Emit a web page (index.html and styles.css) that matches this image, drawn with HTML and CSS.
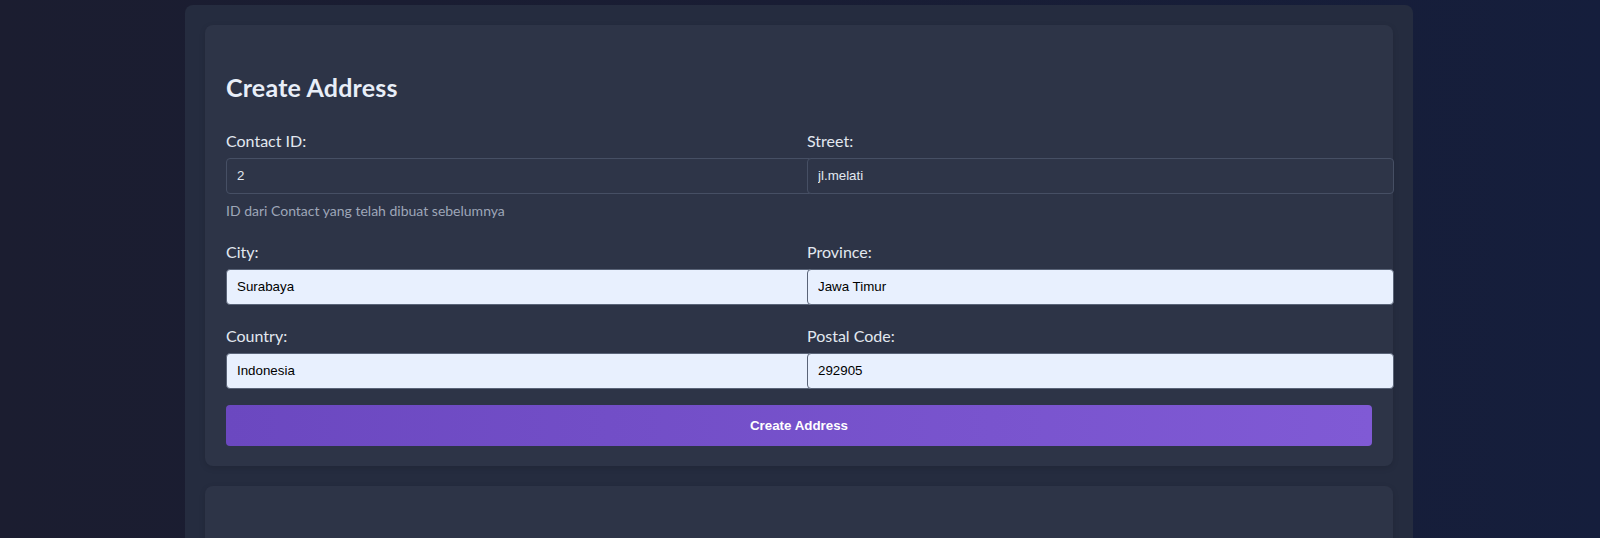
FILE: index.html
```html
<!DOCTYPE html>
<html lang="id">
<head>
<meta charset="utf-8">
<title>Create Address</title>
<link rel="stylesheet" href="styles.css">
</head>
<body>
<div class="container">
  <section class="card">
    <h2 class="title">Create Address</h2>
    <form class="form">
      <div class="grid">
        <div class="group">
          <label class="label">Contact ID:</label>
          <input class="input" type="text" value="2">
          <div class="hint">ID dari Contact yang telah dibuat sebelumnya</div>
        </div>
        <div class="group">
          <label class="label">Street:</label>
          <input class="input" type="text" value="jl.melati">
        </div>
        <div class="group">
          <label class="label">City:</label>
          <input class="input filled" type="text" value="Surabaya">
        </div>
        <div class="group">
          <label class="label">Province:</label>
          <input class="input filled" type="text" value="Jawa Timur">
        </div>
        <div class="group">
          <label class="label">Country:</label>
          <input class="input filled" type="text" value="Indonesia">
        </div>
        <div class="group">
          <label class="label">Postal Code:</label>
          <input class="input filled" type="text" value="292905">
        </div>
      </div>
      <button class="btn" type="button">Create Address</button>
    </form>
  </section>
  <section class="card card-next"></section>
</div>
</body>
</html>
```

FILE: styles.css
```css
html, body {
  margin: 0;
  padding: 0;
}
body {
  height: 538px;
  overflow: hidden;
  background: linear-gradient(to right, #1b1d30 0%, #191d34 50%, #151e3c 100%);
  font-family: "Segoe UI", Lato, "Noto Sans", sans-serif;
  color: #e2e8f0;
}
.container {
  box-sizing: border-box;
  width: 1228px;
  margin: 5px 0 0 calc(50% - 615px);
  padding: 20px;
  min-height: 600px;
  background: #252c3f;
  border-radius: 8px 8px 0 0;
}
.card {
  background: #2d3447;
  border-radius: 8px;
  padding: 20px 21px;
  box-shadow: 0 2px 6px rgba(0, 0, 0, 0.12);
}
.card-next {
  margin-top: 20px;
  height: 120px;
}
.title {
  margin: 26px 0 25px;
  font-size: 25px;
  line-height: 33px;
  letter-spacing: 0.2px;
  font-weight: 700;
  color: #e8eef8;
}
.grid {
  display: grid;
  grid-template-columns: repeat(2, minmax(0, 1fr));
  column-gap: 16px;
  row-gap: 19px;
}
.group {
  min-width: 0;
}
.label {
  display: block;
  font-size: 16px;
  line-height: 24px;
  margin-bottom: 5px;
  color: #e2e8f0;
}
.input {
  display: block;
  width: 100%;
  box-sizing: content-box;
  padding: 9px 10px;
  line-height: 16px;
  height: 16px;
  border: 1px solid #464f64;
  border-radius: 4px;
  background: #2e3548;
  color: #e2e8f0;
  font-family: "Liberation Sans", Arial, sans-serif;
  font-size: 13.333px;
  outline: none;
}
.input.filled {
  background: #e8f0fe;
  color: #000;
  border-color: #5a6478;
}
.hint {
  margin-top: 6px;
  font-size: 14px;
  line-height: 21px;
  color: #9ea6b8;
}
.btn {
  display: block;
  width: 100%;
  margin-top: 16px;
  padding: 13px;
  line-height: 15px;
  border: none;
  border-radius: 4px;
  background: linear-gradient(to right, #6b48c0, #805ad5);
  color: #fff;
  font-family: "Liberation Sans", Arial, sans-serif;
  font-size: 13.333px;
  font-weight: 700;
}
```
